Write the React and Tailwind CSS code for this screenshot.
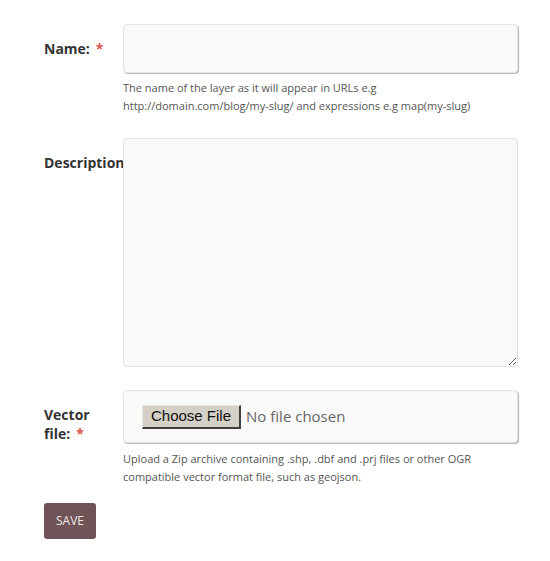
import React from 'react';

const fieldBox =
    'w-[395px] rounded-[4px] border border-[#e3e3e3] bg-[#f9f9f9] shadow-[1px_1px_1px_#b5b5b5]';

const Label = ({ children, required }) => (
    <label className="block w-[79px] pt-[15px] text-[14px] leading-[19px] font-bold text-[#333] whitespace-nowrap">
        {children}
        {required && <span className="ml-[6px] text-[#d9534f]">*</span>}
    </label>
);

const Help = ({ children }) => (
    <p className="text-[11px] leading-[18px] text-[#555]">{children}</p>
);

export default function App() {
    return (
        <div className="min-h-screen bg-white font-['Open_Sans',sans-serif] pt-[24px] pl-[44px]">
            <form className="flex flex-col" onSubmit={(e) => e.preventDefault()}>
                {/* name */}
                <div className="flex items-start">
                    <Label required>Name:</Label>
                    <div>
                        <input type="text" className={`${fieldBox} block h-[49px] outline-none px-3 text-[14px]`} />
                        <div className="mt-[6px]">
                            <Help>
                                The name of the layer as it will appear in URLs e.g
                                <br />
                                http://domain.com/blog/my-slug/ and expressions e.g map(my-slug)
                            </Help>
                        </div>
                    </div>
                </div>

                {/* description */}
                <div className="flex items-start mt-[23px]">
                    <label className="block w-[79px] pt-[15px] text-[14px] leading-[19px] font-bold text-[#333] whitespace-nowrap">
                        Description
                    </label>
                    <textarea className={`${fieldBox} relative block h-[229px] outline-none p-3 text-[14px] resize-y shadow-none`} />
                </div>

                {/* vector file */}
                <div className="flex items-start mt-[23px]">
                    <label className="block w-[79px] pt-[15px] text-[14px] leading-[19px] font-bold text-[#333]">
                        Vector
                        <br />
                        file:<span className="ml-[6px] text-[#d9534f]">*</span>
                    </label>
                    <div>
                        <div className={`${fieldBox} h-[53px] flex items-center pl-[18px]`}>
                            <span className="inline-flex items-center h-[24px] px-[8px] bg-[#d4d0c8] border-r-2 border-b-2 border-[#404040] border-t border-l border-t-[#e8e6e1] border-l-[#e8e6e1] font-['Liberation_Sans',Arial,sans-serif] text-[15px] text-[#111]">
                                Choose File
                            </span>
                            <span className="ml-[5px] text-[15px] text-[#666]">No file chosen</span>
                        </div>
                        <div className="mt-[7px]">
                            <Help>
                                Upload a Zip archive containing .shp, .dbf and .prj files or other OGR
                                <br />
                                compatible vector format file, such as geojson.
                            </Help>
                        </div>
                    </div>
                </div>

                <div className="mt-[17px]">
                    <button
                        type="submit"
                        className="h-[36px] w-[52px] rounded-[3px] bg-[#705357] text-[12px] text-[#f0e8e8] uppercase"
                    >
                        Save
                    </button>
                </div>
            </form>
        </div>
    );
}
